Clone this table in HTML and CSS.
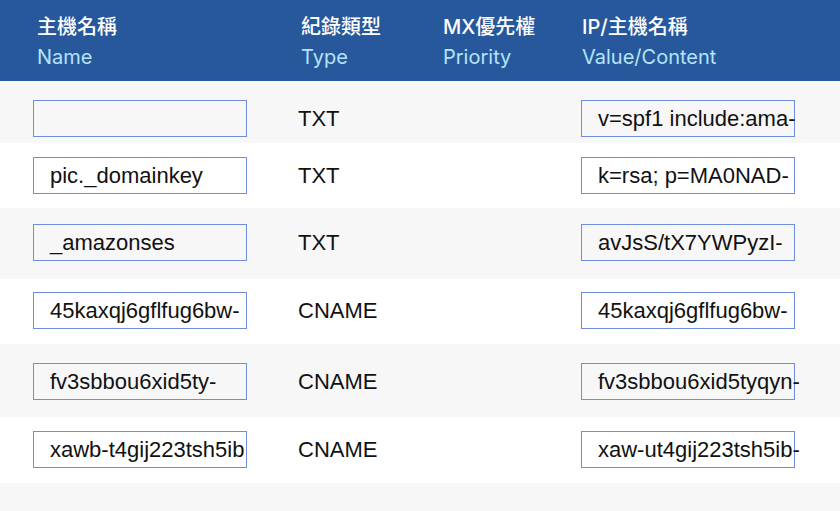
FILE: index.html
```html
<!DOCTYPE html>
<html lang="zh-Hant">
<head>
<meta charset="utf-8">
<link rel="stylesheet" href="styles.css">
</head>
<body>
<div class="table">
  <div class="head">
    <div class="hc c1"><div class="zh">主機名稱</div><div class="en">Name</div></div>
    <div class="hc c2"><div class="zh">紀錄類型</div><div class="en">Type</div></div>
    <div class="hc c3"><div class="zh">MX優先權</div><div class="en">Priority</div></div>
    <div class="hc c4"><div class="zh">IP/主機名稱</div><div class="en">Value/Content</div></div>
  </div>
  <div class="row gray r1">
    <div class="field"></div><div class="type">TXT</div><div></div><div class="field">v=spf1 include:ama-</div>
  </div>
  <div class="row r2">
    <div class="field">pic._domainkey</div><div class="type">TXT</div><div></div><div class="field">k=rsa; p=MA0NAD-</div>
  </div>
  <div class="row gray r3">
    <div class="field">_amazonses</div><div class="type">TXT</div><div></div><div class="field">avJsS/tX7YWPyzI-</div>
  </div>
  <div class="row r4">
    <div class="field">45kaxqj6gflfug6bw-</div><div class="type">CNAME</div><div></div><div class="field">45kaxqj6gflfug6bw-</div>
  </div>
  <div class="row gray r5">
    <div class="field">fv3sbbou6xid5ty-</div><div class="type">CNAME</div><div></div><div class="field">fv3sbbou6xid5tyqyn-</div>
  </div>
  <div class="row r6">
    <div class="field">xawb-t4gij223tsh5ib</div><div class="type">CNAME</div><div></div><div class="field">xaw-ut4gij223tsh5ib-</div>
  </div>
  <div class="row gray tail"></div>
</div>
</body>
</html>
```
FILE: styles.css
```css
html, body {
  margin: 0;
  padding: 0;
  background: #f7f7f7;
}
body {
  font-family: "Liberation Sans", Arial, "Noto Sans CJK TC", sans-serif;
  color: #111;
  width: 840px;
  height: 511px;
  overflow: hidden;
}
.table {
  display: flex;
  flex-direction: column;
}
.head, .row {
  display: grid;
  grid-template-columns: 265px 145px 138px 214px;
  padding-left: 33px;
  box-sizing: border-box;
}
.head {
  background: #28589c;
  height: 81px;
  padding-top: 12px;
  font-family: Inter, "Noto Sans CJK TC", sans-serif;
  font-size: 20px;
  line-height: 30px;
}
.hc .zh {
  color: #ffffff;
  font-weight: 500;
}
.hc .en {
  color: #b4e4fa;
}
.c1 { padding-left: 4px; }
.c2 { padding-left: 3px; }
.c4 { padding-left: 1px; }
.row {
  background: #ffffff;
  align-items: start;
  font-size: 22px;
}
.row.gray { background: #f7f7f7; }
.field {
  width: 214px;
  height: 37px;
  box-sizing: border-box;
  border: 1px solid #6f8ee0;
  padding-left: 16px;
  line-height: 35px;
  white-space: nowrap;
}
.type {
  line-height: 37px;
}
.r1 { height: 62px; padding-top: 19px; }
.r2 { height: 65px; padding-top: 14px; }
.r3 { height: 71px; padding-top: 16px; }
.r4 { height: 65px; padding-top: 13px; }
.r5 { height: 73px; padding-top: 19px; }
.r6 { height: 66px; padding-top: 14px; }
.tail { height: 28px; }
```
